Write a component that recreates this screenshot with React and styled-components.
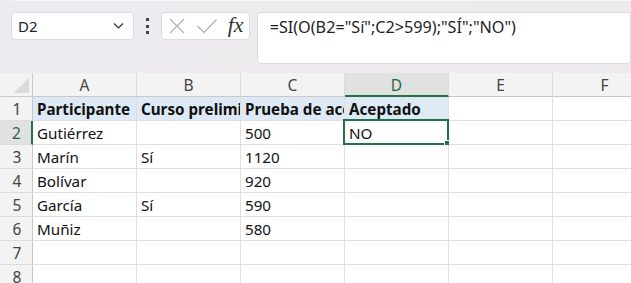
import React from "react";
import styled, { createGlobalStyle } from "styled-components";

const Global = createGlobalStyle`
  html, body { margin: 0; padding: 0; }
  body {
    width: 631px; height: 283px; overflow: hidden;
    background: #ecebef;
    font-family: "Noto Sans", "Open Sans", sans-serif;
  }
`;

const Page = styled.div`
  display: flex;
  flex-direction: column;
  width: 631px;
  height: 283px;
  overflow: hidden;
`;

const TopStrip = styled.div`
  height: 1px;
  margin-left: 12px;
  background: #f7f7f8;
  box-shadow: 0 1px 1px rgba(0,0,0,0.18);
`;

const Toolbar = styled.div`
  height: 72px;
  box-sizing: border-box;
  padding: 11px 0 0 11px;
  display: flex;
  align-items: flex-start;
  background: linear-gradient(90deg, #ecebef 0%, #eeebee 60%, #eceaed 100%);
`;

const Box = styled.div`
  box-sizing: border-box;
  background: #fff;
  border: 1px solid #dcdbde;
  border-radius: 4px;
  height: ${p => p.$h || 28}px;
  width: ${p => p.$w}px;
  display: flex;
  align-items: ${p => p.$top ? "flex-start" : "center"};
`;

const NameText = styled.span`
  flex: 1;
  padding-left: 6px;
  font-size: 15px;
  color: #222;
  font-family: "Noto Sans", sans-serif;
`;

const Dots = styled.div`
  width: 27px;
  height: 28px;
  display: flex;
  flex-direction: column;
  align-items: center;
  justify-content: center;
  gap: 3.5px;
  & > i {
    display: block;
    width: 3px;
    height: 3px;
    background: #444;
  }
`;

const FxGroup = styled(Box)`
  justify-content: space-between;
  padding: 0 5px 0 6px;
  margin-right: 7px;
`;

const Fx = styled.span`
  font-family: "Liberation Serif", "DejaVu Serif", serif;
  font-style: italic;
  font-size: 22px;
  color: #333;
  line-height: 1;
  margin-top: -2px;
`;

const Formula = styled.div`
  padding: 3px 0 0 12px;
  font-size: 16.2px;
  color: #1f1f1f;
  white-space: nowrap;
`;

const Sheet = styled.div`
  display: grid;
  grid-template-columns: 33px repeat(6, 104px);
  grid-auto-rows: 24px;
  background: #fff;
  flex: 1;
  overflow: hidden;
`;

const ColHead = styled.div`
  box-sizing: border-box;
  background: ${p => p.$sel ? "#e1e1e1" : "#f3f3f3"};
  border-right: 1px solid #dcdcdc;
  border-bottom: ${p => p.$sel ? "2px solid #217346" : "1px solid #c8c8c8"};
  color: ${p => p.$sel ? "#1d6b40" : "#444"};
  display: flex;
  align-items: center;
  justify-content: center;
  font-size: 15.5px;
  height: 24px;
  padding-top: 1px;
`;

const Corner = styled.div`
  position: relative;
  box-sizing: border-box;
  background: #f3f3f3;
  border-right: 1px solid #c8c8c8;
  border-bottom: 1px solid #c8c8c8;
  &::after {
    content: "";
    position: absolute;
    right: 3px;
    bottom: 3px;
    width: 0;
    height: 0;
    border-left: 15px solid transparent;
    border-bottom: 15px solid #dadada;
  }
`;

const RowHead = styled.div`
  box-sizing: border-box;
  background: ${p => p.$sel ? "#e1e1e1" : "#f3f3f3"};
  border-right: ${p => p.$sel ? "2px solid #217346" : "1px solid #c8c8c8"};
  border-bottom: 1px solid #dcdcdc;
  color: ${p => p.$sel ? "#1d6b40" : "#444"};
  display: flex;
  align-items: center;
  justify-content: center;
  font-size: 15.5px;
  padding-left: 2px;
`;

const Cell = styled.div`
  position: relative;
  box-sizing: border-box;
  border-right: 1px solid #dfdfdf;
  border-bottom: 1px solid #dfdfdf;
  background: ${p => p.$head ? "#dde9f5" : "#fff"};
  font-weight: ${p => p.$head ? 700 : 400};
  font-size: 15.2px;
  color: #111;
  padding: 1px 0 0 4px;
  white-space: nowrap;
  overflow: ${p => p.$sel ? "visible" : "hidden"};
  display: flex;
  align-items: center;
`;

const Selection = styled.div`
  position: absolute;
  left: -2px;
  top: -2px;
  right: -1px;
  bottom: -1px;
  border: 2px solid #217346;
  pointer-events: none;
  &::after {
    content: "";
    position: absolute;
    right: -4px;
    bottom: -4px;
    width: 5px;
    height: 5px;
    background: #217346;
    border: 1px solid #fff;
  }
`;

const cols = ["A", "B", "C", "D", "E", "F"];
const data = [
  ["Participante", "Curso preliminar", "Prueba de acceso", "Aceptado", "", ""],
  ["Gutiérrez", "", "500", "NO", "", ""],
  ["Marín", "Sí", "1120", "", "", ""],
  ["Bolívar", "", "920", "", "", ""],
  ["García", "Sí", "590", "", "", ""],
  ["Muñiz", "", "580", "", "", ""],
  ["", "", "", "", "", ""],
  ["", "", "", "", "", ""],
];

export default function App() {
  return (
    <Page>
      <Global />
      <TopStrip />
      <Toolbar>
        <Box $w={125}>
          <NameText>D2</NameText>
          <svg width="28" height="10" viewBox="0 0 28 10">
            <path d="M9 2.5 L13.5 7 L18 2.5" fill="none" stroke="#333" strokeWidth="1.2" />
          </svg>
        </Box>
        <Dots><i /><i /><i /></Dots>
        <FxGroup $w={90}>
          <svg width="18" height="18" viewBox="0 0 18 18">
            <path d="M2 2 L16 16 M16 2 L2 16" stroke="#b4b4b4" strokeWidth="1.3" fill="none" />
          </svg>
          <svg width="22" height="16" viewBox="0 0 22 16">
            <path d="M1.5 8 L8 14.5 L20.5 1.5" stroke="#b4b4b4" strokeWidth="1.3" fill="none" />
          </svg>
          <Fx>fx</Fx>
        </FxGroup>
        <Box $w={380} $h={52} $top>
          <Formula>=SI(O(B2="Sí";C2&gt;599);"SÍ";"NO")</Formula>
        </Box>
      </Toolbar>
      <Sheet>
        <Corner />
        {cols.map(c => (
          <ColHead key={c} $sel={c === "D"}>{c}</ColHead>
        ))}
        {data.map((row, r) => (
          <React.Fragment key={r}>
            <RowHead $sel={r === 1}>{r + 1}</RowHead>
            {row.map((v, c) => {
              const sel = r === 1 && c === 3;
              return (
                <Cell key={c} $head={r === 0 && c < 4} $sel={sel}>
                  {v}
                  {sel && <Selection />}
                </Cell>
              );
            })}
          </React.Fragment>
        ))}
      </Sheet>
    </Page>
  );
}
